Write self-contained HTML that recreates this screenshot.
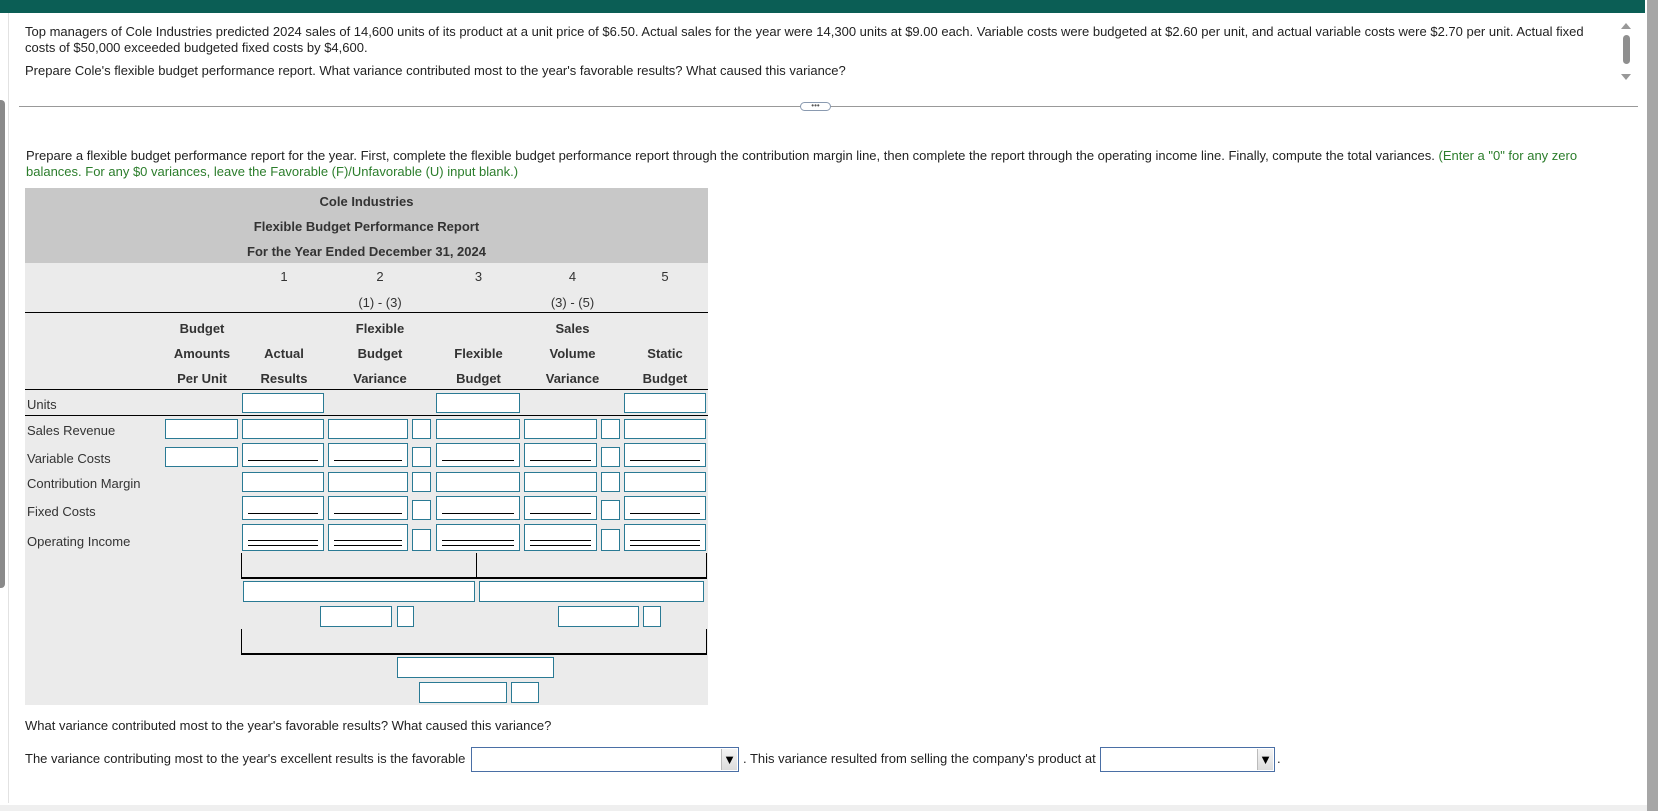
<!DOCTYPE html>
<html><head><meta charset="utf-8">
<style>
*{margin:0;padding:0;box-sizing:border-box}
body{width:1658px;height:811px;overflow:hidden;background:#fff;font-family:"Liberation Sans",Arial,sans-serif;font-size:13px;color:#222;position:relative}
.a{position:absolute;white-space:nowrap}
.i{position:absolute;background:#fff;border:1px solid #2a7a94}
.u:after{content:"";position:absolute;left:5px;right:5px;bottom:5px;border-bottom:1px solid #000}
.d:after{content:"";position:absolute;left:5px;right:5px;bottom:4px;height:4px;border-top:1px solid #000;border-bottom:1px solid #000}
.h{font-weight:bold;color:#333;text-align:center;line-height:16px}
.hh{font-weight:bold;color:#333;text-align:center;line-height:25px}
.c{color:#333;text-align:center;line-height:16px}
.sel{position:absolute;background:#fff;border:1px solid #4a6fa5}
.sel b{position:absolute;right:1px;top:1px;bottom:1px;width:16px;background:linear-gradient(#f4f4f4,#dcdcdc);border-left:1px solid #bbb;font-size:13px;line-height:22px;text-align:center;color:#000}
</style></head><body>
<div class="a" style="left:0;top:0;width:1645px;height:13px;background:#0b5e55"></div>
<div class="a" style="left:1647px;top:0;width:11px;height:811px;background:#a6a6a6"></div>
<div class="a" style="left:0;top:100px;width:5px;height:488px;background:#8a8a8a;border-radius:0 4px 4px 0"></div>
<div class="a" style="left:8px;top:13px;width:1px;height:790px;background:#e2e2e2"></div>
<div class="a" style="left:0;top:805px;width:1647px;height:6px;background:#efefef"></div>
<div class="a" style="left:1621px;top:23px;width:0;height:0;border-left:5px solid transparent;border-right:5px solid transparent;border-bottom:6px solid #999"></div>
<div class="a" style="left:1623px;top:35px;width:7px;height:29px;background:#8f8f8f;border-radius:4px"></div>
<div class="a" style="left:1621px;top:74px;width:0;height:0;border-left:5px solid transparent;border-right:5px solid transparent;border-top:6px solid #999"></div>

<div class="a" style="left:25px;top:24px;line-height:16px">Top managers of Cole Industries predicted 2024 sales of 14,600 units of its product at a unit price of $6.50. Actual sales for the year were 14,300 units at $9.00 each. Variable costs were budgeted at $2.60 per unit, and actual variable costs were $2.70 per unit. Actual fixed<br>costs of $50,000 exceeded budgeted fixed costs by $4,600.</div>
<div class="a" style="left:25px;top:63px;line-height:16px">Prepare Cole's flexible budget performance report. What variance contributed most to the year's favorable results? What caused this variance?</div>
<div class="a" style="left:19px;top:106px;width:1619px;height:1px;background:#999"></div>
<div class="a" style="left:800px;top:102px;width:31px;height:9px;border:1px solid #8a9ab0;border-radius:5px;background:#fff;font-size:8px;line-height:5px;text-align:center;color:#555">•••</div>

<div class="a" style="left:26px;top:148px;line-height:16px">Prepare a flexible budget performance report for the year. First, complete the flexible budget performance report through the contribution margin line, then complete the report through the operating income line. Finally, compute the total variances. <span style="color:#2b7d2b">(Enter a "0" for any zero</span><br><span style="color:#2b7d2b">balances. For any $0 variances, leave the Favorable (F)/Unfavorable (U) input blank.)</span></div>

<div class="a" style="left:25px;top:188px;width:683px;height:75px;background:#c8c8c8"></div>
<div class="a" style="left:25px;top:263px;width:683px;height:442px;background:#ebebeb"></div>
<div class="a h" style="left:25px;top:194px;width:683px">Cole Industries</div>
<div class="a h" style="left:25px;top:219px;width:683px">Flexible Budget Performance Report</div>
<div class="a h" style="left:25px;top:244px;width:683px">For the Year Ended December 31, 2024</div>

<div class="a c" style="left:243px;top:269px;width:82px">1</div>
<div class="a c" style="left:329px;top:269px;width:102px">2</div>
<div class="a c" style="left:436px;top:269px;width:85px">3</div>
<div class="a c" style="left:524px;top:269px;width:97px">4</div>
<div class="a c" style="left:624px;top:269px;width:82px">5</div>
<div class="a c" style="left:329px;top:295px;width:102px">(1) - (3)</div>
<div class="a c" style="left:524px;top:295px;width:97px">(3) - (5)</div>
<div class="a" style="left:25px;top:312px;width:683px;height:1px;background:#000"></div>

<div class="a hh" style="left:165px;top:316px;width:74px">Budget<br>Amounts<br>Per Unit</div>
<div class="a hh" style="left:243px;top:341px;width:82px">Actual<br>Results</div>
<div class="a hh" style="left:329px;top:316px;width:102px">Flexible<br>Budget<br>Variance</div>
<div class="a hh" style="left:436px;top:341px;width:85px">Flexible<br>Budget</div>
<div class="a hh" style="left:524px;top:316px;width:97px">Sales<br>Volume<br>Variance</div>
<div class="a hh" style="left:624px;top:341px;width:82px">Static<br>Budget</div>
<div class="a" style="left:25px;top:389px;width:683px;height:1px;background:#000"></div>
<div class="a" style="left:25px;top:415px;width:683px;height:1px;background:#000"></div>

<div class="a" style="left:27px;top:397px;color:#333">Units</div>
<div class="a" style="left:27px;top:423px;color:#333">Sales Revenue</div>
<div class="a" style="left:27px;top:451px;color:#333">Variable Costs</div>
<div class="a" style="left:27px;top:476px;color:#333">Contribution Margin</div>
<div class="a" style="left:27px;top:504px;color:#333">Fixed Costs</div>
<div class="a" style="left:27px;top:534px;color:#333">Operating Income</div>

<div class="i" style="left:242px;top:393px;width:82px;height:20px"></div>
<div class="i" style="left:436px;top:393px;width:84px;height:20px"></div>
<div class="i" style="left:624px;top:393px;width:82px;height:20px"></div>

<div class="i" style="left:165px;top:419px;width:73px;height:20px"></div>
<div class="i" style="left:242px;top:419px;width:82px;height:20px"></div>
<div class="i" style="left:328px;top:419px;width:80px;height:20px"></div>
<div class="i" style="left:412px;top:419px;width:19px;height:20px"></div>
<div class="i" style="left:436px;top:419px;width:84px;height:20px"></div>
<div class="i" style="left:524px;top:419px;width:73px;height:20px"></div>
<div class="i" style="left:601px;top:419px;width:19px;height:20px"></div>
<div class="i" style="left:624px;top:419px;width:82px;height:20px"></div>

<div class="i" style="left:165px;top:447px;width:73px;height:20px"></div>
<div class="i u" style="left:242px;top:443px;width:82px;height:24px"></div>
<div class="i u" style="left:328px;top:443px;width:80px;height:24px"></div>
<div class="i" style="left:412px;top:447px;width:19px;height:20px"></div>
<div class="i u" style="left:436px;top:443px;width:84px;height:24px"></div>
<div class="i u" style="left:524px;top:443px;width:73px;height:24px"></div>
<div class="i" style="left:601px;top:447px;width:19px;height:20px"></div>
<div class="i u" style="left:624px;top:443px;width:82px;height:24px"></div>

<div class="i" style="left:242px;top:472px;width:82px;height:20px"></div>
<div class="i" style="left:328px;top:472px;width:80px;height:20px"></div>
<div class="i" style="left:412px;top:472px;width:19px;height:20px"></div>
<div class="i" style="left:436px;top:472px;width:84px;height:20px"></div>
<div class="i" style="left:524px;top:472px;width:73px;height:20px"></div>
<div class="i" style="left:601px;top:472px;width:19px;height:20px"></div>
<div class="i" style="left:624px;top:472px;width:82px;height:20px"></div>

<div class="i u" style="left:242px;top:496px;width:82px;height:24px"></div>
<div class="i u" style="left:328px;top:496px;width:80px;height:24px"></div>
<div class="i" style="left:412px;top:500px;width:19px;height:20px"></div>
<div class="i u" style="left:436px;top:496px;width:84px;height:24px"></div>
<div class="i u" style="left:524px;top:496px;width:73px;height:24px"></div>
<div class="i" style="left:601px;top:500px;width:19px;height:20px"></div>
<div class="i u" style="left:624px;top:496px;width:82px;height:24px"></div>

<div class="i d" style="left:242px;top:524px;width:82px;height:27px"></div>
<div class="i d" style="left:328px;top:524px;width:80px;height:27px"></div>
<div class="i" style="left:412px;top:529px;width:19px;height:22px"></div>
<div class="i d" style="left:436px;top:524px;width:84px;height:27px"></div>
<div class="i d" style="left:524px;top:524px;width:73px;height:27px"></div>
<div class="i" style="left:601px;top:529px;width:19px;height:22px"></div>
<div class="i d" style="left:624px;top:524px;width:82px;height:27px"></div>

<div class="a" style="left:241px;top:553px;width:466px;height:26px;border-left:1px solid #000;border-right:1px solid #000;border-bottom:2px solid #000"></div>
<div class="a" style="left:476px;top:553px;width:1px;height:25px;background:#000"></div>
<div class="i" style="left:243px;top:581px;width:232px;height:21px"></div>
<div class="i" style="left:479px;top:581px;width:225px;height:21px"></div>
<div class="i" style="left:320px;top:606px;width:72px;height:21px"></div>
<div class="i" style="left:397px;top:606px;width:17px;height:21px"></div>
<div class="i" style="left:558px;top:606px;width:81px;height:21px"></div>
<div class="i" style="left:643px;top:606px;width:18px;height:21px"></div>
<div class="a" style="left:241px;top:629px;width:466px;height:26px;border-left:1px solid #000;border-right:1px solid #000;border-bottom:2px solid #000"></div>
<div class="i" style="left:397px;top:657px;width:157px;height:21px"></div>
<div class="i" style="left:419px;top:682px;width:88px;height:21px"></div>
<div class="i" style="left:511px;top:682px;width:28px;height:21px"></div>

<div class="a" style="left:25px;top:718px">What variance contributed most to the year's favorable results? What caused this variance?</div>
<div class="a" style="left:25px;top:751px">The variance contributing most to the year's excellent results is the favorable</div>
<div class="sel" style="left:471px;top:747px;width:268px;height:25px"><b>▼</b></div>
<div class="a" style="left:743px;top:751px">. This variance resulted from selling the company's product at</div>
<div class="sel" style="left:1100px;top:747px;width:175px;height:25px"><b>▼</b></div>
<div class="a" style="left:1277px;top:751px">.</div>
</body></html>
